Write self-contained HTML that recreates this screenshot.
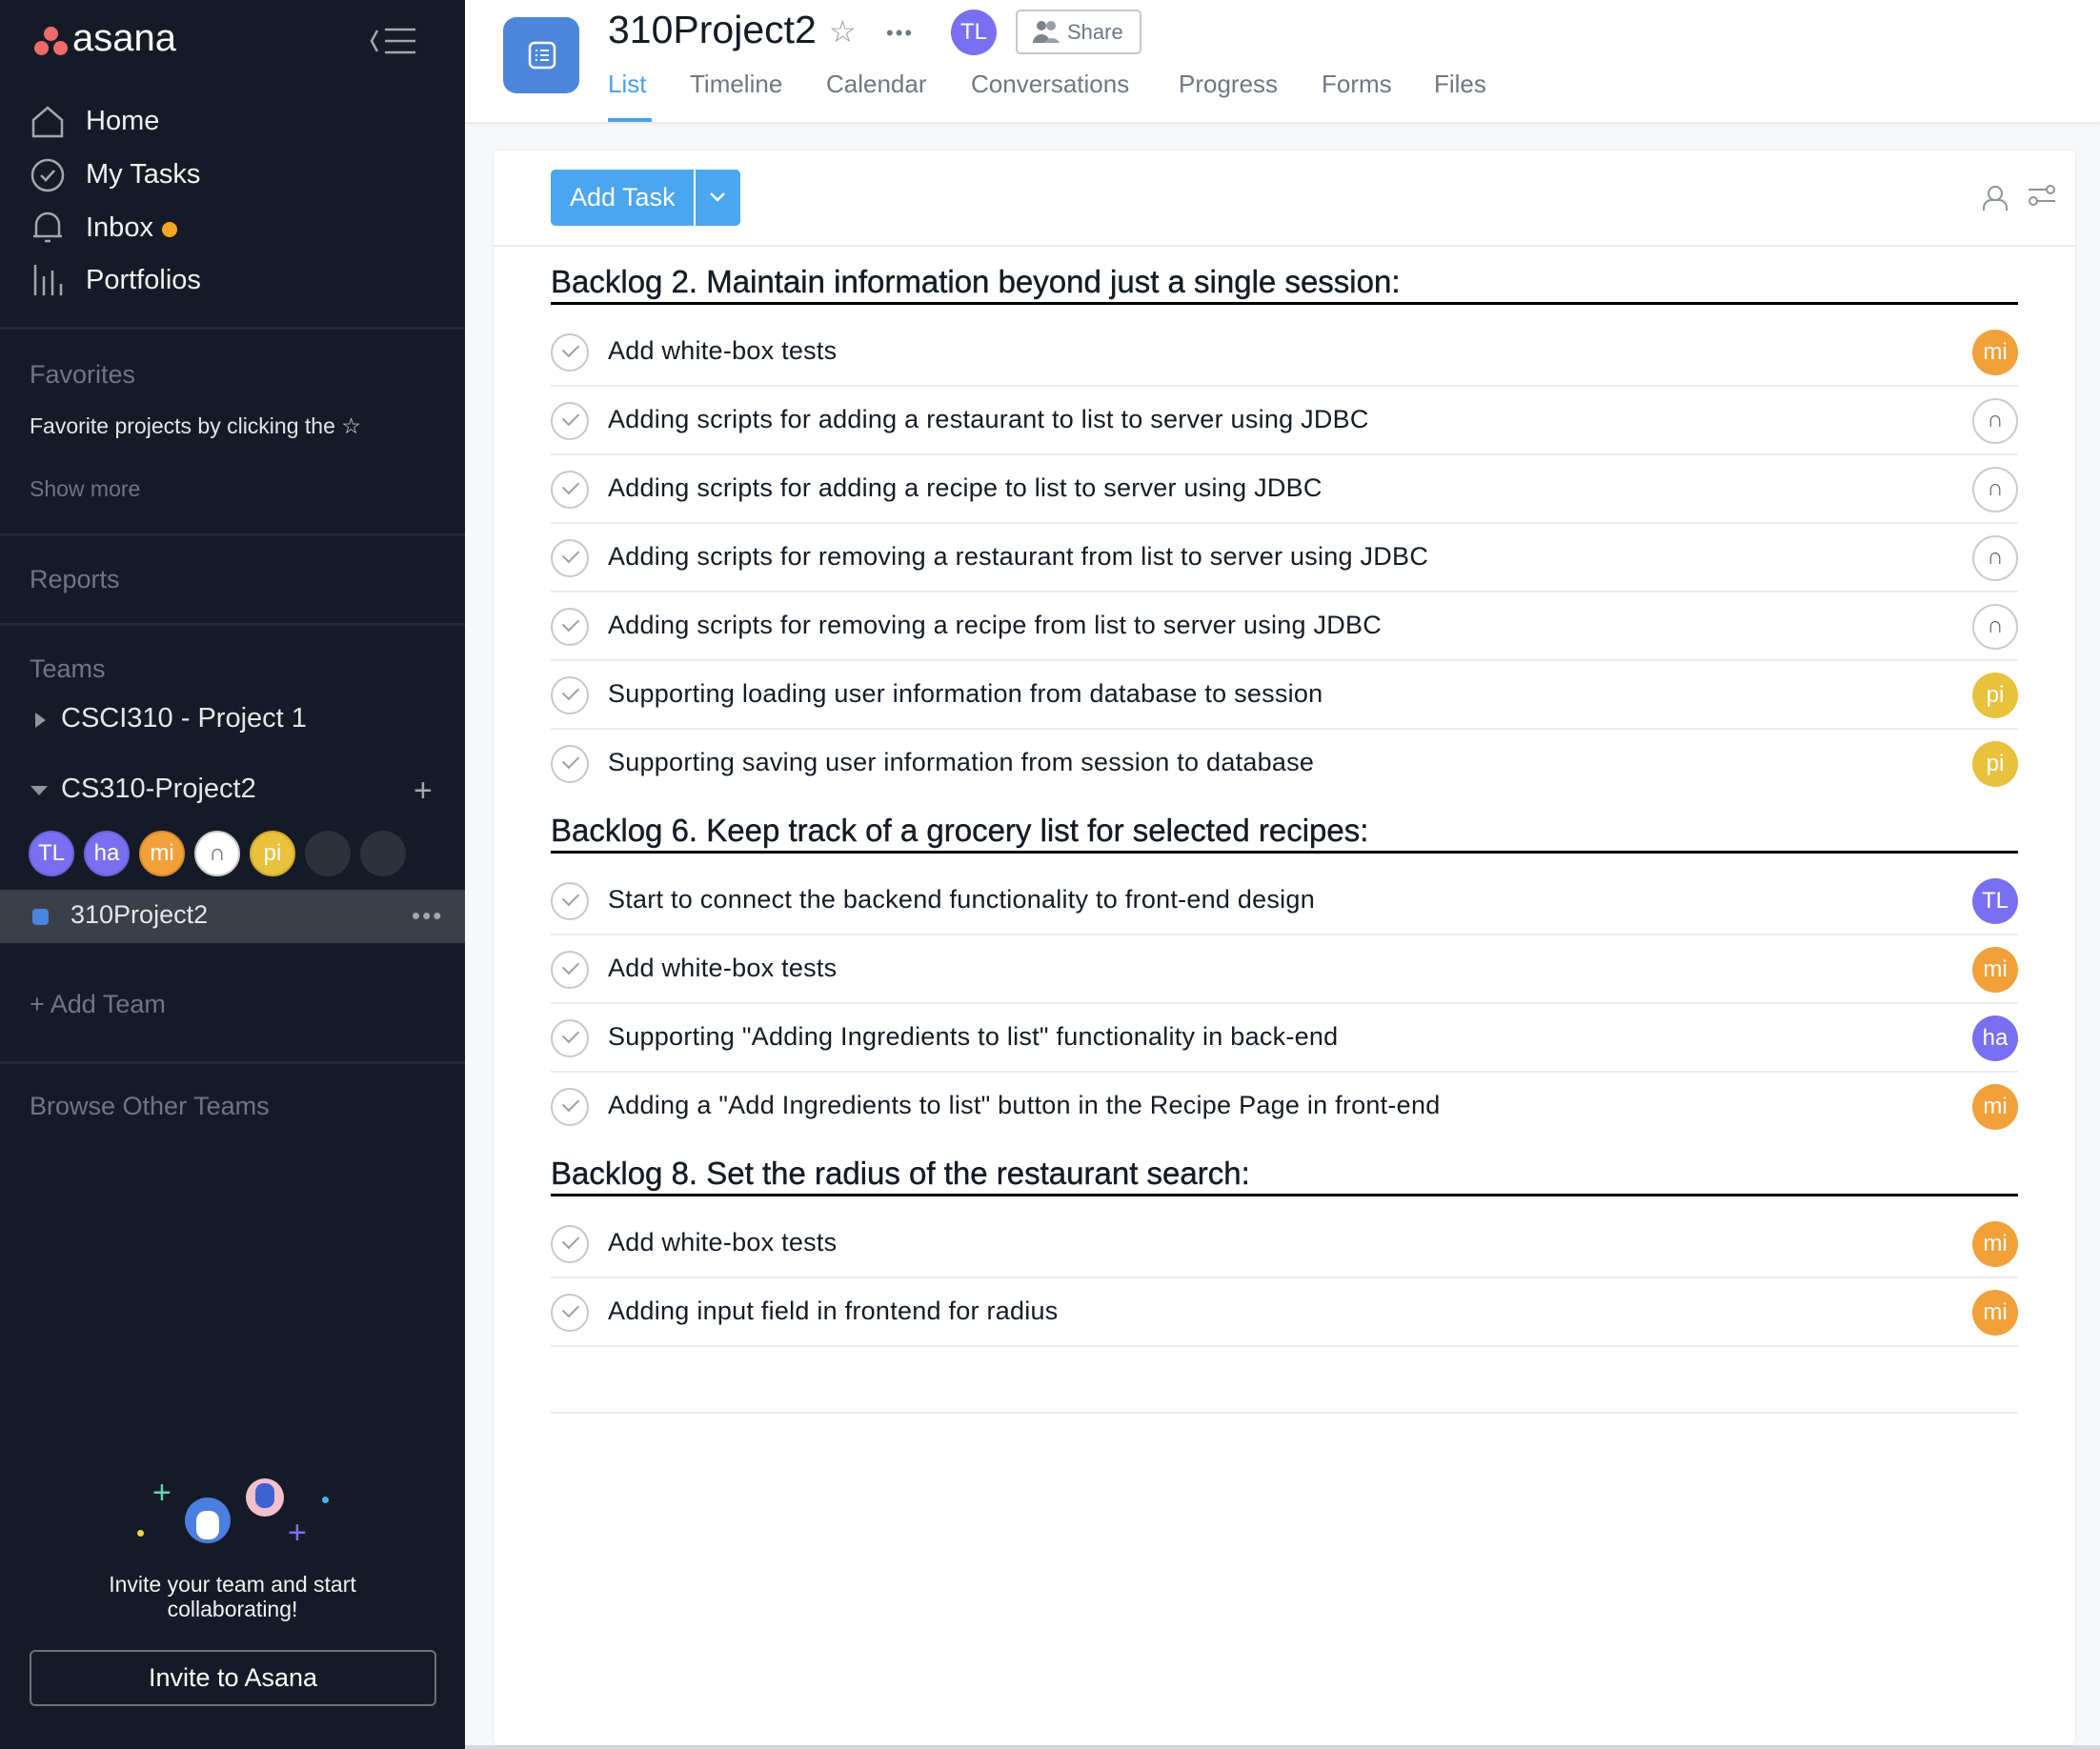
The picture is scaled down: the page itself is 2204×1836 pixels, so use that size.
<!DOCTYPE html>
<html style="overflow:hidden"><head><meta charset="utf-8"><style>
*{box-sizing:border-box;margin:0;padding:0}
html,body{width:2204px;height:1836px;overflow:hidden}
body{position:relative;font-family:"Liberation Sans",sans-serif;background:#f6f8f9}
.a{position:absolute}
#sb{left:0;top:0;width:488px;height:1836px;background:#151b26;color:#f1f2f3}
.nav{font-size:29px;color:#f1f2f3;left:90px}
.hd{font-size:27px;color:#6d7681;left:31px}
.dv{left:0;width:488px;height:3px;background:#242a35}
.av{border-radius:50%;color:#fff;text-align:center;font-size:24px}
#main{left:488px;top:0;width:1716px;height:128px;background:#fff;box-shadow:0 2px 3px rgba(0,0,0,.08)}
.tab{top:73px;font-size:26px;color:#6f7782}
#card{left:518px;top:158px;width:1660px;height:1674px;background:#fff;border-radius:6px;box-shadow:0 0 2px rgba(0,0,0,.12)}
.sec{left:578px;width:1540px;font-size:33px;color:#151b26;border-bottom:3px solid #000;height:43px;white-space:nowrap;-webkit-text-stroke:0.4px #151b26}
.row{left:578px;width:1540px;height:72px;border-bottom:2px solid #e8ecee}
.row .ck{position:absolute;left:0;top:16px;width:40px;height:40px;border:2px solid #c5c9cd;border-radius:50%}
.row .t{position:absolute;left:60px;top:19px;font-size:27px;letter-spacing:0.25px;color:#151b26;white-space:nowrap}
.row .av{position:absolute;right:0;top:12px;width:48px;height:48px;line-height:48px;font-size:24px}
.ck::after{content:"";position:absolute;left:11px;top:9px;width:14px;height:8px;border-left:2.5px solid #9ca1a7;border-bottom:2.5px solid #9ca1a7;transform:rotate(-45deg)}
</style></head><body>
<div id="sb" class="a">
 <div class="a" style="left:36px;top:28px">
  <div class="a" style="left:10px;top:0;width:15px;height:15px;border-radius:50%;background:#f06a6a"></div>
  <div class="a" style="left:0;top:15px;width:15px;height:15px;border-radius:50%;background:#f06a6a"></div>
  <div class="a" style="left:20px;top:15px;width:15px;height:15px;border-radius:50%;background:#f06a6a"></div>
 </div>
 <div class="a" style="left:76px;top:18px;font-size:40px;color:#fff">asana</div>
 <svg class="a" style="left:386px;top:28px" width="54" height="30"><path d="M10 4 L4 15 L10 26 M18 3 H50 M18 15 H50 M18 27 H50" stroke="#a2a7ad" stroke-width="2.5" fill="none"/></svg>
 <svg class="a" style="left:32px;top:110px" width="36" height="36"><path d="M3 16 L18 3 L33 16 V33 H3 Z" stroke="#a2a7ad" stroke-width="2.5" fill="none"/></svg>
 <div class="a nav" style="top:111px">Home</div>
 <svg class="a" style="left:32px;top:166px" width="36" height="36"><circle cx="18" cy="18" r="16" stroke="#a2a7ad" stroke-width="2.5" fill="none"/><path d="M11 18 l5 5 l9 -10" stroke="#a2a7ad" stroke-width="2.5" fill="none"/></svg>
 <div class="a nav" style="top:167px">My Tasks</div>
 <svg class="a" style="left:32px;top:220px" width="36" height="40"><path d="M6 28 V16 a12 12 0 0 1 24 0 V28 H3 H33 M15 33 h6" stroke="#a2a7ad" stroke-width="2.5" fill="none"/></svg>
 <div class="a nav" style="top:223px">Inbox</div>
 <div class="a" style="left:170px;top:233px;width:16px;height:16px;border-radius:50%;background:#f5a623"></div>
 <svg class="a" style="left:34px;top:276px" width="34" height="36"><path d="M3 2V34 M12 14V34 M21 8V34 M30 22V34" stroke="#a2a7ad" stroke-width="2.5"/></svg>
 <div class="a nav" style="top:278px">Portfolios</div>
 <div class="a dv" style="top:343px"></div>
 <div class="a hd" style="top:378px">Favorites</div>
 <div class="a" style="left:31px;top:434px;font-size:23px;color:#e4e6e8">Favorite projects by clicking the ☆</div>
 <div class="a" style="left:31px;top:500px;font-size:23px;color:#6d7681">Show more</div>
 <div class="a dv" style="top:560px"></div>
 <div class="a hd" style="top:593px">Reports</div>
 <div class="a dv" style="top:654px"></div>
 <div class="a hd" style="top:687px">Teams</div>
 <div class="a" style="left:37px;top:748px;width:0;height:0;border-left:11px solid #8e949b;border-top:8px solid transparent;border-bottom:8px solid transparent"></div>
 <div class="a" style="left:64px;top:738px;font-size:29px;color:#e4e6e8">CSCI310 - Project 1</div>
 <div class="a" style="left:32px;top:825px;width:0;height:0;border-top:10px solid #8e949b;border-left:9px solid transparent;border-right:9px solid transparent"></div>
 <div class="a" style="left:64px;top:812px;font-size:29px;color:#e4e6e8">CS310-Project2</div>
 <div class="a" style="left:434px;top:816px;font-size:34px;color:#a2a7ad;line-height:28px">+</div>
 <div class="a av" style="left:30px;top:872px;width:48px;height:48px;line-height:44px;background:#7a6ff0;border:2px solid #6c62d8">TL</div>
 <div class="a av" style="left:88px;top:872px;width:48px;height:48px;line-height:44px;background:#7a6ff0;border:2px solid #6c62d8">ha</div>
 <div class="a av" style="left:146px;top:872px;width:48px;height:48px;line-height:44px;background:#f1a03a;border:2px solid #d88b2d">mi</div>
 <div class="a av" style="left:204px;top:872px;width:48px;height:48px;line-height:44px;background:#fff;border:2px solid #ccc;color:#666">∩</div>
 <div class="a av" style="left:262px;top:872px;width:48px;height:48px;line-height:44px;background:#e8c13d;border:2px solid #cfa92f">pi</div>
 <div class="a av" style="left:320px;top:872px;width:48px;height:48px;background:#2c313a"></div>
 <div class="a av" style="left:378px;top:872px;width:48px;height:48px;background:#2c313a"></div>
 <div class="a" style="left:0;top:934px;width:488px;height:56px;background:#3b3f48"></div>
 <div class="a" style="left:34px;top:954px;width:17px;height:17px;border-radius:4px;background:#4a86dd"></div>
 <div class="a" style="left:74px;top:945px;font-size:27px;color:#e4e6e8">310Project2</div>
 <div class="a" style="left:432px;top:951px;font-size:26px;color:#a2a7ad;letter-spacing:2px;line-height:20px">•••</div>
 <div class="a" style="left:31px;top:1039px;font-size:27px;color:#6d7681">+ Add Team</div>
 <div class="a dv" style="top:1114px"></div>
 <div class="a hd" style="top:1146px">Browse Other Teams</div>
 <div class="a" style="left:160px;top:1552px;font-size:34px;color:#5ed6b0;line-height:30px">+</div>
 <div class="a" style="left:144px;top:1606px;width:7px;height:7px;border-radius:50%;background:#f5d33e"></div>
 <div class="a" style="left:194px;top:1572px;width:48px;height:48px;border-radius:50%;background:#4a7ee0"><div class="a" style="left:12px;top:14px;width:24px;height:30px;border-radius:10px;background:#fff"></div></div>
 <div class="a" style="left:258px;top:1552px;width:40px;height:40px;border-radius:50%;background:#f3c0cc"><div class="a" style="left:10px;top:5px;width:20px;height:26px;border-radius:9px;background:#3d63d3"></div></div>
 <div class="a" style="left:302px;top:1594px;font-size:34px;color:#7a6ff0;line-height:30px">+</div>
 <div class="a" style="left:338px;top:1571px;width:7px;height:7px;border-radius:50%;background:#4ab4f0"></div>
 <div class="a" style="left:0;top:1650px;width:488px;text-align:center;font-size:23px;line-height:26px;color:#f1f2f3">Invite your team and start<br>collaborating!</div>
 <div class="a" style="left:31px;top:1732px;width:427px;height:59px;border:2px solid #6d7177;border-radius:6px;text-align:center;line-height:55px;font-size:27px;color:#fff">Invite to Asana</div>
</div>
<div class="a" style="left:488px;top:1832px;width:1716px;height:4px;background:#d5d8db"></div>
<div id="main" class="a">
 <div class="a" style="left:40px;top:18px;width:80px;height:80px;border-radius:14px;background:#4e86dc"></div>
 <svg class="a" style="left:66px;top:43px" width="30" height="30"><rect x="2" y="2" width="26" height="26" rx="5" stroke="#fff" stroke-width="2.5" fill="none"/><path d="M8 10h2M13 10h9M8 15h2M13 15h9M8 20h2M13 20h9" stroke="#fff" stroke-width="2"/></svg>
 <div class="a" style="left:150px;top:8px;font-size:41px;color:#151b26">310Project2</div>
 <div class="a" style="left:382px;top:14px;font-size:32px;color:#8e949b">☆</div>
 <div class="a" style="left:442px;top:22px;font-size:22px;color:#6f7782;letter-spacing:2px">•••</div>
 <div class="a av" style="left:510px;top:10px;width:48px;height:48px;line-height:48px;background:#7a6ff0">TL</div>
 <div class="a" style="left:578px;top:10px;width:132px;height:47px;border:2px solid #c4c8cc;border-radius:5px;font-size:22px;color:#6f7782;line-height:43px;padding-left:52px">Share</div>
 <svg class="a" style="left:595px;top:20px" width="30" height="26"><circle cx="10" cy="7" r="5" fill="#7b838c"/><circle cx="20" cy="7" r="5" fill="#9aa0a6"/><path d="M1 25 a9 9 0 0 1 18 0Z" fill="#7b838c"/><path d="M13 25 a9 9 0 0 1 16 0Z" fill="#9aa0a6"/></svg>
 <div class="a tab" style="left:150px;color:#4a9ff0">List</div>
 <div class="a" style="left:150px;top:124px;width:46px;height:4px;background:#4a9ff0"></div>
 <div class="a tab" style="left:236px">Timeline</div>
 <div class="a tab" style="left:379px">Calendar</div>
 <div class="a tab" style="left:531px">Conversations</div>
 <div class="a tab" style="left:749px">Progress</div>
 <div class="a tab" style="left:899px">Forms</div>
 <div class="a tab" style="left:1017px">Files</div>
</div>
<div id="card" class="a"></div>
<div class="a" style="left:578px;top:178px;width:199px;height:59px;border-radius:5px;background:#4aa6ee;color:#fff;font-size:27px;line-height:59px;padding-left:20px">Add Task</div>
<div class="a" style="left:728px;top:178px;width:2px;height:59px;background:#fff"></div>
<svg class="a" style="left:744px;top:200px" width="18" height="14"><path d="M2 3 L9 10 L16 3" stroke="#fff" stroke-width="2.5" fill="none"/></svg>
<svg class="a" style="left:2080px;top:194px" width="28" height="28"><circle cx="14" cy="9" r="7" stroke="#8e949b" stroke-width="2" fill="none"/><path d="M2 27 v-3 a8 8 0 0 1 8 -8 h8 a8 8 0 0 1 8 8 v3" stroke="#8e949b" stroke-width="2" fill="none"/></svg>
<svg class="a" style="left:2128px;top:194px" width="30" height="24"><circle cx="24" cy="5" r="4" stroke="#8e949b" stroke-width="2" fill="none"/><circle cx="6" cy="17" r="4" stroke="#8e949b" stroke-width="2" fill="none"/><path d="M1 5H20M10 17H29" stroke="#8e949b" stroke-width="2"/></svg>
<div class="a" style="left:518px;top:257px;width:1660px;height:2px;background:#e8ecee"></div>

<div class="a sec" style="top:277px">Backlog 2. Maintain information beyond just a single session:</div>
<div class="a row" style="top:334px"><div class="ck"></div><div class="t">Add white-box tests</div><div class="av" style="background:#f1a03a">mi</div></div>
<div class="a row" style="top:406px"><div class="ck"></div><div class="t">Adding scripts for adding a restaurant to list to server using JDBC</div><div class="av" style="background:#fff;border:2px solid #ccc;color:#666;line-height:42px">∩</div></div>
<div class="a row" style="top:478px"><div class="ck"></div><div class="t">Adding scripts for adding a recipe to list to server using JDBC</div><div class="av" style="background:#fff;border:2px solid #ccc;color:#666;line-height:42px">∩</div></div>
<div class="a row" style="top:550px"><div class="ck"></div><div class="t">Adding scripts for removing a restaurant from list to server using JDBC</div><div class="av" style="background:#fff;border:2px solid #ccc;color:#666;line-height:42px">∩</div></div>
<div class="a row" style="top:622px"><div class="ck"></div><div class="t">Adding scripts for removing a recipe from list to server using JDBC</div><div class="av" style="background:#fff;border:2px solid #ccc;color:#666;line-height:42px">∩</div></div>
<div class="a row" style="top:694px"><div class="ck"></div><div class="t">Supporting loading user information from database to session</div><div class="av" style="background:#e8c13d">pi</div></div>
<div class="a row" style="top:766px;border-bottom:none"><div class="ck"></div><div class="t">Supporting saving user information from session to database</div><div class="av" style="background:#e8c13d">pi</div></div>

<div class="a sec" style="top:853px">Backlog 6. Keep track of a grocery list for selected recipes:</div>
<div class="a row" style="top:910px"><div class="ck"></div><div class="t">Start to connect the backend functionality to front-end design</div><div class="av" style="background:#7a6ff0">TL</div></div>
<div class="a row" style="top:982px"><div class="ck"></div><div class="t">Add white-box tests</div><div class="av" style="background:#f1a03a">mi</div></div>
<div class="a row" style="top:1054px"><div class="ck"></div><div class="t">Supporting "Adding Ingredients to list" functionality in back-end</div><div class="av" style="background:#7a6ff0">ha</div></div>
<div class="a row" style="top:1126px;border-bottom:none"><div class="ck"></div><div class="t">Adding a "Add Ingredients to list" button in the Recipe Page in front-end</div><div class="av" style="background:#f1a03a">mi</div></div>

<div class="a sec" style="top:1213px">Backlog 8. Set the radius of the restaurant search:</div>
<div class="a row" style="top:1270px"><div class="ck"></div><div class="t">Add white-box tests</div><div class="av" style="background:#f1a03a">mi</div></div>
<div class="a row" style="top:1342px"><div class="ck"></div><div class="t">Adding input field in frontend for radius</div><div class="av" style="background:#f1a03a">mi</div></div>
<div class="a" style="left:578px;top:1482px;width:1540px;height:2px;background:#e8ecee"></div>
</body></html>
